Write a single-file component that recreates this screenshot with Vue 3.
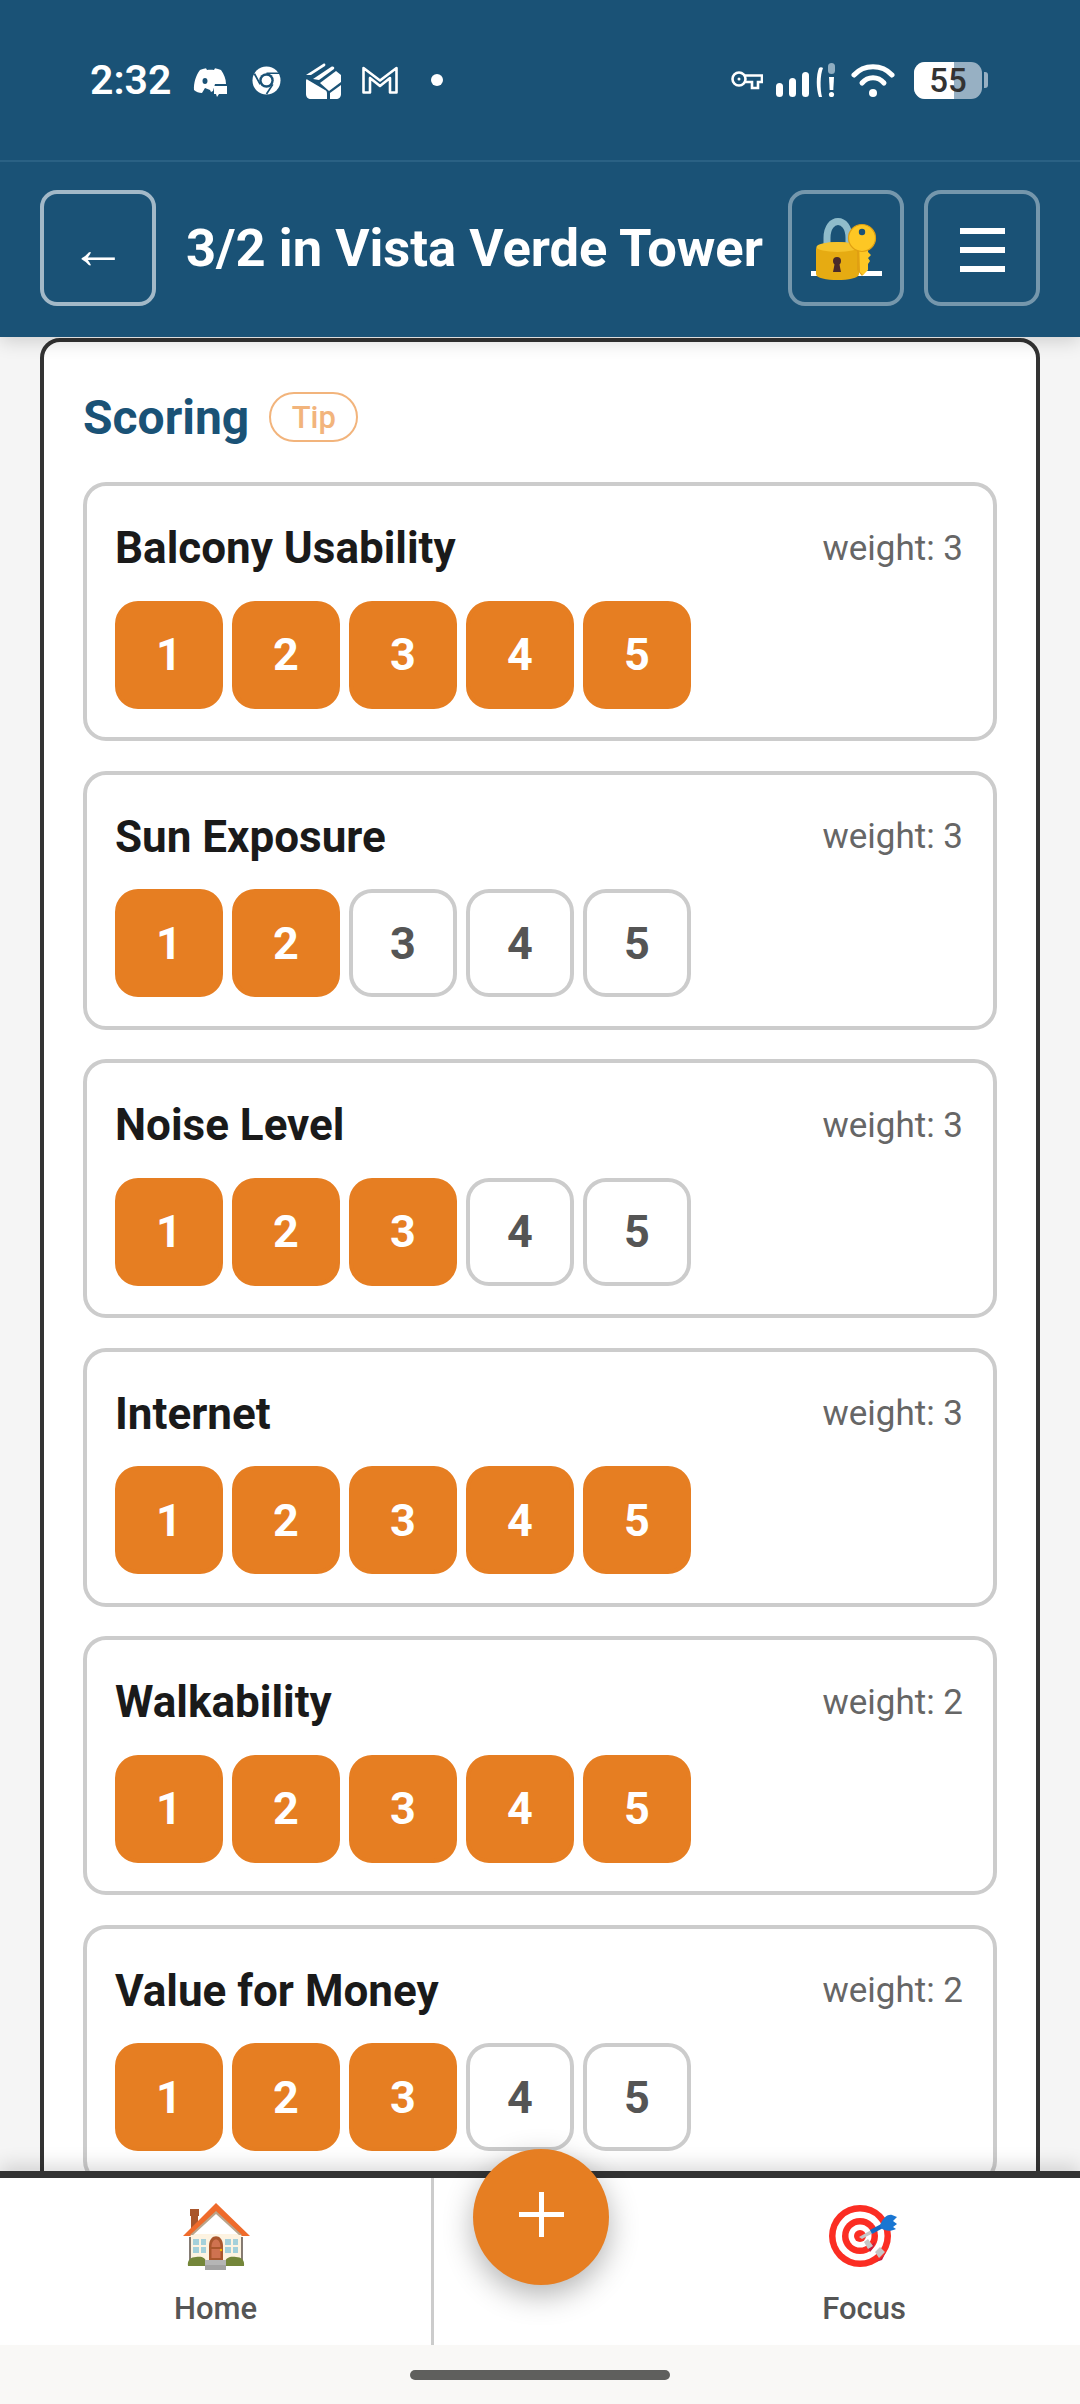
<script setup>
const rows = [
  { name: 'Balcony Usability', weight: 3, score: 5 },
  { name: 'Sun Exposure', weight: 3, score: 2 },
  { name: 'Noise Level', weight: 3, score: 3 },
  { name: 'Internet', weight: 3, score: 5 },
  { name: 'Walkability', weight: 2, score: 5 },
  { name: 'Value for Money', weight: 2, score: 3 },
]
const scale = [1, 2, 3, 4, 5]
</script>

<template>
  <div class="page">
    <div class="top">
      <div class="status">
        <div class="status-left">
          <span class="time">2:32</span>
          <svg class="ic-discord" viewBox="0 0 34 29" fill="#fff">
            <path fill-rule="evenodd" d="M7 2 C10 .6 12 .3 13 .2 L14 2 C16 1.7 19 1.7 21 2 L22 .2 C24 .5 26 1 28 2 C31 6 33 11 33 16 L22 16 L20 23 L18 24 L17 22 L12 20 L9 25 C6 25 3 24 1 22 C.5 15 3 7 7 2 Z M12 10 C10.400 10 9.500 11.300 9.500 13 C9.500 14.700 10.400 16 12 16 C13.600 16 14.500 14.700 14.500 13 C14.500 11.300 13.600 10 12 10 Z"/>
            <path d="M21 18 H34 V26 H26 L24 29 L23 26 H21 Z"/>
          </svg>
          <svg class="ic-chrome" viewBox="0 0 30 30">
            <circle cx="15" cy="15" r="14.500" fill="#fff"/>
            <circle cx="15" cy="15" r="7.500" fill="#1a5276"/>
            <circle cx="15" cy="15" r="5" fill="#fff"/>
            <path d="M15 7.500 H28 M8.500 19 L2.500 8 M21.500 19 L15 29" stroke="#1a5276" stroke-width="1.800"/>
          </svg>
          <svg class="ic-stack" viewBox="0 0 37 37" fill="#fff">
            <path d="M1 14 L18 3 C20 2 21 3 20 5 L6 14 Z" transform="translate(0 -1)"/>
            <path d="M8 17 L26 5 C28 4 30 5 29 7 L14 18 Z"/>
            <path d="M15 21 L31 9 L36 13 L36 20 L24 29 Z"/>
            <path d="M1 19 C1 17 2 17 3 18 L20 28 C22 29 22 30 22 33 L22 37 H6 C3 37 1 35 1 32 Z"/>
            <path d="M36 23 V32 C36 35 34 37 31 37 H25 V31 Z"/>
          </svg>
          <svg class="ic-m" viewBox="0 0 36 28" fill="none" stroke="#fff" stroke-width="2.600" stroke-linejoin="round">
            <path d="M1.500 2 L18 14.500 L34.500 2 V26.500 H28 V12 L18 20 L8 12 V26.500 H1.500 Z"/>
          </svg>
          <span class="dot"></span>
        </div>
        <div class="status-right">
          <svg class="ic-key" viewBox="0 0 32 20" fill="none" stroke="#fff" stroke-width="2.600">
            <circle cx="8" cy="9" r="6.500"/>
            <circle cx="8" cy="9" r="1.500" fill="#fff" stroke="none"/>
            <path d="M14 5.500 H31 V12 H27 V18 H21 V12 H14"/>
          </svg>
          <svg class="ic-signal" viewBox="0 0 59 34" fill="#fff">
            <rect x="0" y="20" width="7" height="14" rx="3.500"/>
            <rect x="13" y="15" width="7" height="19" rx="3.500"/>
            <rect x="26" y="9" width="7" height="25" rx="3.500"/>
            <path d="M43 5 C40 12 40 26 43 34 H46 C44 26 44 12 47 5 C46 4 44 4 43 5 Z"/>
            <rect x="52" y="0" width="7" height="11" rx="3.500" fill="#8fadc1"/>
            <path d="M53 14 H58 L57.300 27 H53.700 Z"/>
            <circle cx="55.500" cy="31.500" r="2.600"/>
          </svg>
          <svg class="ic-wifi" viewBox="0 0 44 34" fill="none" stroke="#fff" stroke-linecap="round" stroke-width="5">
            <path d="M3 12 C13 1 31 1 41 12"/>
            <path d="M11 20 C17 13 27 13 33 20"/>
            <circle cx="22" cy="30" r="4" fill="#fff" stroke="none"/>
          </svg>
          <div class="battery">
            <div class="cell"><span class="cell-fill"></span><span class="cell-num">55</span></div>
            <span class="nub"></span>
          </div>
        </div>
      </div>
      <header class="head">
        <button class="hbtn back">←</button>
        <h1 class="title">3/2 in Vista Verde Tower</h1>
        <button class="hbtn">
          <svg class="ic-lock" viewBox="25 35 80 70">
            <rect x="30" y="91" width="71" height="5" fill="#fff"/>
            <path d="M46 70 V58 C46 36 68 36 68 58 V70" fill="none" stroke="#8fbccb" stroke-width="7"/>
            <path d="M35 69 C35 60 78 60 78 69 V94 C78 102 35 102 35 94 Z" fill="#e6ab12"/>
            <ellipse cx="56.500" cy="67" rx="21" ry="5" fill="#f5c32c"/>
            <circle cx="56" cy="81" r="4" fill="#4a2a2a"/>
            <path d="M54 82 H58 L60 92 H52 Z" fill="#4a2a2a"/>
            <path d="M76 60 H86 V90 L81 96 L76 90 Z" fill="#e0a012"/>
            <path d="M78 60 H87 V72 L90 75 L87 78 L89 81 L87 84 V90 L82 95 L79 92 Z" fill="#fdc724"/>
            <circle cx="81" cy="58" r="13.500" fill="#fdc724" stroke="#e0a012" stroke-width="1.200"/>
            <circle cx="81" cy="52" r="3.200" fill="#1a5276"/>
          </svg>
        </button>
        <button class="hbtn menu"><i></i><i></i><i></i></button>
      </header>
    </div>

    <main class="main">
      <section class="panel">
        <div class="panel-head">
          <h2 class="panel-title">Scoring</h2>
          <span class="tip">Tip</span>
        </div>
        <div class="list">
          <article v-for="r in rows" :key="r.name" class="item">
            <div class="item-head">
              <span class="item-name">{{ r.name }}</span>
              <span class="item-weight">weight: {{ r.weight }}</span>
            </div>
            <div class="scale">
              <span v-for="n in scale" :key="n" class="num" :class="{ on: n <= r.score }">{{ n }}</span>
            </div>
          </article>
        </div>
      </section>
    </main>

    <nav class="nav">
      <div class="tab left">
        <svg class="ic-house" viewBox="20 10 70 72">
          <rect x="29" y="19" width="9" height="7" fill="#a9562c"/>
          <rect x="30" y="24" width="7" height="16" fill="#a9562c"/>
          <path d="M29 44 H81 V73 H29 Z" fill="#fdf3e1"/>
          <path d="M29 47 V73 M81 47 V73" stroke="#5d5148" stroke-width="1.500"/>
          <path d="M55 13 L22 46 H29 L55 22 L81 46 H89 Z" fill="#ef6b2b"/>
          <path d="M55 21 L29 45 H32 L55 24 L78 45 H81 Z" fill="#b9a48a"/>
          <g fill="#a4d0da">
            <rect x="32" y="49" width="6" height="6"/><rect x="40" y="49" width="5" height="6"/>
            <rect x="32" y="57" width="6" height="6"/><rect x="40" y="57" width="5" height="6"/>
            <rect x="64" y="49" width="6" height="6"/><rect x="72" y="49" width="5" height="6"/>
            <rect x="64" y="57" width="6" height="6"/><rect x="72" y="57" width="5" height="6"/>
          </g>
          <path d="M48 70 V56 C48 43 62 43 62 56 V70 Z" fill="#a9562c"/>
          <path d="M50.500 57 C50.500 47 59.500 47 59.500 57 Z M50.500 59 H59.500 V68 H50.500 Z" fill="#cf7250"/>
          <circle cx="60" cy="60" r="1.200" fill="#f5b800"/>
          <path d="M27 76 C26 70 30 67 35 67 C42 66 46 68 45 76 Z M64 76 C63 68 68 66 75 67 C80 67 84 70 83 76 Z" fill="#74863a"/>
          <rect x="44" y="70" width="21" height="5" fill="#b5b5b5"/>
          <rect x="44" y="75" width="21" height="5" fill="#a2a2a2"/>
        </svg>
        <span class="tab-label">Home</span>
      </div>
      <div class="tab-mid"></div>
      <div class="tab">
        <svg class="ic-target" viewBox="32 13 70 66">
          <circle cx="63" cy="46" r="31" fill="#fb2d23"/>
          <circle cx="63" cy="46" r="24.500" fill="#fff"/>
          <circle cx="63" cy="46" r="18" fill="#fb2d23"/>
          <circle cx="63" cy="46" r="11.500" fill="#fff"/>
          <circle cx="63" cy="46" r="6" fill="#fb2d23"/>
          <path d="M71 58 L78 52 A18 18 0 0 1 73 62 Z M85 70 L91 58 A31 31 0 0 1 79 72 Z" fill="#c91b3c"/>
          <path d="M67 52 L71 49 L76 56 L71 59 Z M78 62 L83 57 L88 62 L82 68 Z" fill="#c6c6c6"/>
          <path d="M62 47 L76 39 L78 42 L65 49 Z" fill="#c6c6c6"/>
          <path d="M73 40 L86 33 L88 37 L75 44 Z" fill="#1269c4"/>
          <path d="M83 36 C85 29 90 24 95 25 L100 27 L96 31 L100 34 L96 37 L99 39 C93 42 88 41 84 38 Z" fill="#1976d2"/>
        </svg>
        <span class="tab-label">Focus</span>
      </div>
      <button class="fab" aria-label="Add"><i class="h"></i><i class="v"></i></button>
    </nav>

    <div class="gesture"><span class="pill"></span></div>
  </div>
</template>

<style scoped>
.page {
  width: 1080px;
  height: 2404px;
  display: flex;
  flex-direction: column;
  background: #f5f5f5;
  overflow: hidden;
  font-family: Roboto, "Noto Sans", sans-serif;
  position: relative;
}
.top {
  background: #1a5276;
  position: relative;
  z-index: 2;
  box-shadow: 0 4px 18px rgba(0, 0, 0, 0.16);
  flex: none;
}
.status {
  height: 162px;
  border-bottom: 2px solid #2a6184;
  display: flex;
  align-items: center;
  justify-content: space-between;
  padding: 0 92px 0 90px;
  box-sizing: border-box;
  color: #fff;
}
.status-left, .status-right { display: flex; align-items: center; }
.time { font-size: 41px; font-weight: 600; line-height: 1; width: 81px; }
.ic-discord { width: 34px; height: 29px; margin-left: 22px; margin-top: 4px; }
.ic-chrome { width: 29px; height: 29px; margin-left: 25px; }
.ic-stack { width: 37px; height: 37px; margin-left: 24px; }
.ic-m { width: 36px; height: 28px; margin-left: 20px; }
.dot { width: 12px; height: 12px; border-radius: 50%; background: #fff; margin-left: 33px; }
.ic-key { width: 32px; height: 20px; margin-right: 13px; }
.ic-signal { width: 59px; height: 34px; margin-right: 16px; }
.ic-wifi { width: 44px; height: 34px; margin-right: 19px; }
.battery { display: flex; align-items: center; }
.cell {
  width: 68px;
  height: 37px;
  border-radius: 11px;
  background: #97b0c3;
  position: relative;
  overflow: hidden;
  display: flex;
  align-items: center;
  justify-content: center;
}
.cell-fill { position: absolute; left: 0; top: 0; bottom: 0; width: 40px; background: #fff; }
.cell-num { position: relative; font-size: 33px; font-weight: 500; color: #333; line-height: 1; }
.nub { width: 4px; height: 16px; background: #97b0c3; border-radius: 0 3px 3px 0; margin-left: 2px; }

.head {
  height: 175px;
  box-sizing: border-box;
  display: flex;
  align-items: center;
  padding: 0 40px 4px;
}
.hbtn {
  width: 116px;
  height: 116px;
  flex: none;
  box-sizing: border-box;
  border: 4px solid rgba(255, 255, 255, 0.4);
  border-radius: 17px;
  background: none;
  padding: 0;
  display: flex;
  align-items: center;
  justify-content: center;
  color: #fff;
}
.back {
  border-color: rgba(255, 255, 255, 0.6);
  font-family: "Liberation Sans", sans-serif;
  font-size: 56px;
  padding-top: 2px;
}
.title {
  flex: 1;
  margin: 0 0 0 30px;
  font-size: 52.5px;
  font-weight: 700;
  color: #fff;
  white-space: nowrap;
}
.ic-lock { width: 80px; height: 70px; margin-top: 4px; }
.menu { flex-direction: column; gap: 13px; margin-left: 20px; padding-top: 5px; }
.menu i { display: block; width: 45px; height: 6px; background: #fff; }

.main {
  flex: 1;
  min-height: 0;
  overflow: hidden;
  padding: 0 40px;
  position: relative;
  z-index: 1;
}
.panel {
  background: #fff;
  border: 4px solid #333;
  border-radius: 20px;
  margin-top: 1px;
  padding: 50px 39px 40px;
}
.panel-head { display: flex; align-items: center; height: 50px; margin-bottom: 40px; }
.panel-title { margin: 0; font-size: 48px; font-weight: 700; color: #1a5276; }
.tip {
  margin-left: 20px;
  height: 50px;
  width: 89px;
  box-sizing: border-box;
  border: 2px solid #f2b47c;
  border-radius: 25px;
  color: #f2b47c;
  font-size: 31px;
  font-weight: 500;
  display: flex;
  align-items: center;
  justify-content: center;
}
.list { display: flex; flex-direction: column; gap: 29.5px; }
.item {
  border: 4px solid #ccc;
  border-radius: 23px;
  height: 259px;
  box-sizing: border-box;
  padding: 28px 30px 28px 28px;
  flex: none;
}
.item-head {
  display: flex;
  align-items: center;
  justify-content: space-between;
  height: 68px;
  margin-bottom: 18.5px;
}
.item-name { font-size: 44px; font-weight: 700; color: #1a1a1a; }
.item-weight { font-size: 35px; color: #666; }
.scale { display: flex; gap: 9px; }
.num {
  width: 108px;
  height: 108px;
  box-sizing: border-box;
  border: 4px solid #ccc;
  border-radius: 23px;
  display: flex;
  align-items: center;
  justify-content: center;
  font-size: 45px;
  font-weight: 700;
  color: #555;
}
.num.on { background: #e67e22; border-color: #e67e22; color: #fff; }

.nav {
  flex: none;
  height: 174px;
  box-sizing: border-box;
  border-top: 7px solid #333;
  background: #fff;
  display: flex;
  position: relative;
  z-index: 3;
  box-shadow: 0 -6px 18px rgba(0, 0, 0, 0.14);
}
.tab {
  width: 432px;
  flex: none;
  display: flex;
  flex-direction: column;
  align-items: center;
  box-sizing: border-box;
  padding-top: 22px;
}
.tab.left { border-right: 3px solid #ccc; width: 434px; }
.tab-mid { flex: 1; }
.ic-house { width: 70px; height: 72px; }
.ic-target { width: 70px; height: 66px; margin-top: 3px; margin-bottom: 3px; }
.tab-label { font-size: 31px; font-weight: 500; color: #555; line-height: 36px; margin-top: 19px; }
.fab {
  position: absolute;
  left: 473px;
  top: -29px;
  width: 136px;
  height: 136px;
  border: none;
  padding: 0;
  border-radius: 50%;
  background: #e67e22;
  box-shadow: 0 10px 30px rgba(0, 0, 0, 0.3);
}
.fab i { position: absolute; background: #fff; display: block; }
.fab .h { left: 46px; top: 63px; width: 45px; height: 5px; }
.fab .v { left: 66px; top: 43px; width: 5px; height: 45px; }

.gesture {
  flex: none;
  height: 59px;
  background: #f9f8f6;
  position: relative;
  z-index: 3;
  display: flex;
  justify-content: center;
  padding-top: 25px;
  box-sizing: border-box;
}
.pill { width: 260px; height: 10px; border-radius: 5px; background: #5f5f5d; }
</style>

<style>
html, body { margin: 0; background: #f5f5f5; }
</style>
